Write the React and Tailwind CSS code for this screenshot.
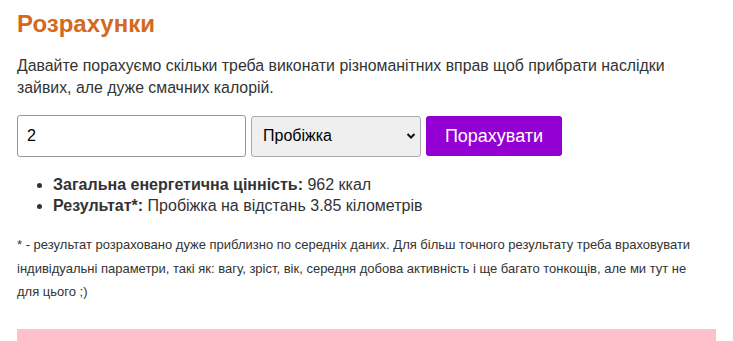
import React, { useState } from 'react'

const MET = { run: { label: 'Пробіжка', kmPerKcal: 0.004 } }

export default function App() {
  const [amount, setAmount] = useState('2')
  const [activity, setActivity] = useState('run')

  return (
    <div className="px-[17px] pt-[8px] font-['Liberation_Sans',Arial,sans-serif] text-[#333]">
      <h1 className="text-[24px] leading-[32px] font-bold text-[#d2691e]">Розрахунки</h1>

      <p className="mt-[15px] text-[15.85px] leading-[22px] text-[#333]">
        Давайте порахуємо скільки треба виконати різноманітних вправ щоб прибрати наслідки
        зайвих, але дуже смачних калорій.
      </p>

      <div className="mt-[16px] flex items-center gap-[5px]">
        <input
          value={amount}
          onChange={(e) => setAmount(e.target.value)}
          className="w-[229px] h-[42px] border border-[#999] rounded-[3px] px-[9px] text-[16px] text-black bg-white"
        />
        <div className="relative">
          <select
            value={activity}
            onChange={(e) => setActivity(e.target.value)}
            className="appearance-none w-[170px] h-[41px] border border-[#aaa] rounded-[3px] bg-[#efefef] pl-[11px] text-[16px] text-black"
          >
            <option value="run">{MET.run.label}</option>
          </select>
          <svg className="absolute right-[5px] top-[16px] pointer-events-none" width="10" height="8" viewBox="0 0 10 8">
            <path d="M1.5 2 L5 5.5 L8.5 2" stroke="#111" strokeWidth="2" fill="none" />
          </svg>
        </div>
        <button className="w-[136px] h-[40px] rounded-[3px] bg-[#9400d3] text-white text-[18px]">
          Порахувати
        </button>
      </div>

      <ul className="mt-[17px] pl-[36px] list-disc text-[16px] leading-[21px] text-[#333]">
        <li>
          <b>Загальна енергетична цінність:</b> 962 ккал
        </li>
        <li>
          <b>Результат*:</b> Пробіжка на відстань 3.85 кілометрів
        </li>
      </ul>

      <p className="mt-[17px] max-w-[695px] text-[13px] leading-[23.5px] text-[#333]">
        * - результат розраховано дуже приблизно по середніх даних. Для більш точного результату треба враховувати
        індивідуальні параметри, такі як: вагу, зріст, вік, середня добова активність і ще багато тонкощів, але ми тут не
        для цього ;)
      </p>

      <div className="mt-[25px] h-[20px] bg-[#ffc0cb]" />
    </div>
  )
}
